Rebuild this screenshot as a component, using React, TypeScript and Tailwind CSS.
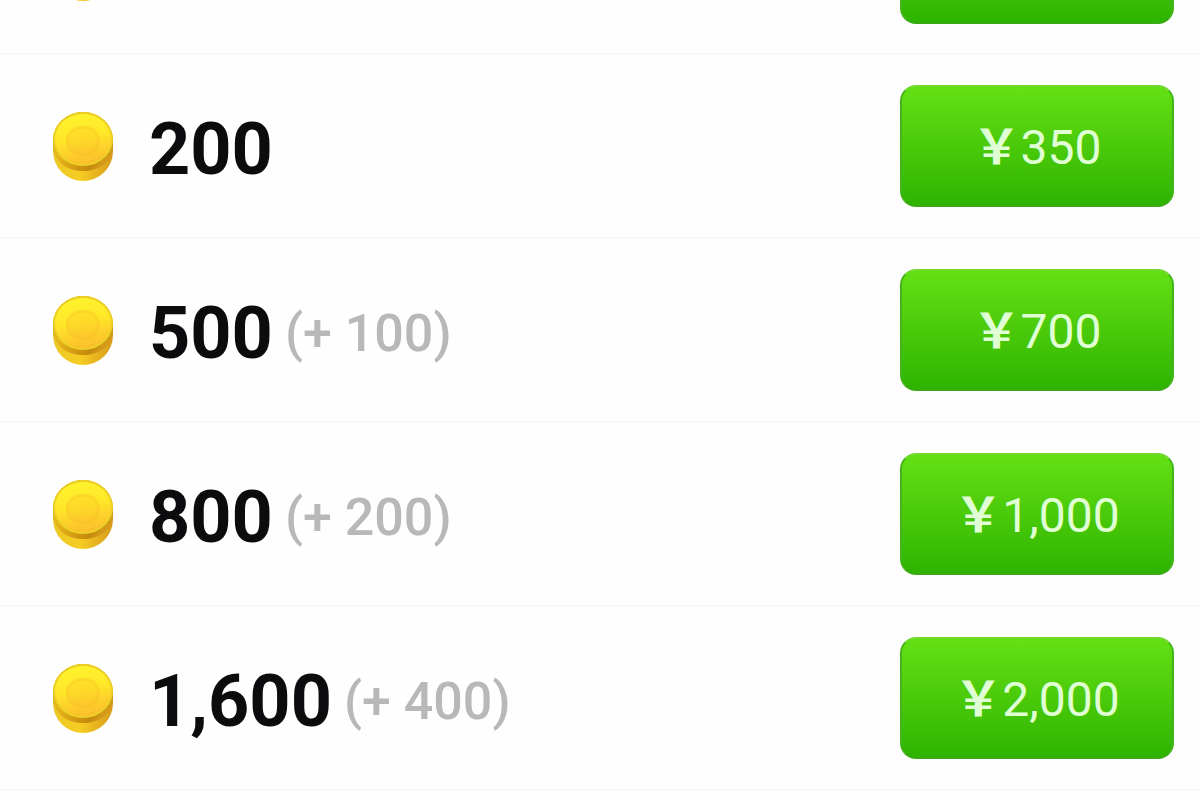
type Pack = {
  coins: string;
  bonus?: string;
  price: string;
};

const packs: Pack[] = [
  { coins: "200", price: "\uFFE5350" },
  { coins: "500", bonus: "(+ 100)", price: "\uFFE5700" },
  { coins: "800", bonus: "(+ 200)", price: "\uFFE51,000" },
  { coins: "1,600", bonus: "(+ 400)", price: "\uFFE52,000" },
];

function Coin() {
  return (
    <svg viewBox="0 0 64 72" className="h-[72px] w-16 shrink-0" aria-hidden="true">
      <defs>
        <linearGradient id="coin-face" x1="0.4" y1="0" x2="0.6" y2="1">
          <stop offset="0" stopColor="#fff32c" />
          <stop offset="0.45" stopColor="#ffe728" />
          <stop offset="1" stopColor="#fcbc2c" />
        </linearGradient>
        <linearGradient id="coin-edge" x1="0" y1="0" x2="1" y2="0.3">
          <stop offset="0" stopColor="#dcba22" />
          <stop offset="0.3" stopColor="#e6b31a" />
          <stop offset="0.8" stopColor="#c48a0c" />
          <stop offset="1" stopColor="#d49a1a" />
        </linearGradient>
        <linearGradient id="coin-base" x1="0" y1="0" x2="1" y2="0">
          <stop offset="0" stopColor="#ecc926" />
          <stop offset="0.45" stopColor="#f7cd25" />
          <stop offset="1" stopColor="#d69a1a" />
        </linearGradient>
      </defs>
      <path d="M3 31a30 29 0 0 1 60 0v10a30 30 0 0 1-60 0z" fill="url(#coin-base)" />
      <path d="M3 31a30 29 0 0 1 60 0v7c-2 15-15 23-30 23S5 53 3 38z" fill="url(#coin-edge)" />
      <ellipse cx="33" cy="29" rx="30" ry="27" fill="#ecd026" />
      <ellipse cx="33" cy="29" rx="28" ry="25" fill="url(#coin-face)" />
      <ellipse cx="33" cy="31" rx="16" ry="14" fill="#fbb62e" opacity="0.2" />
      <ellipse cx="33" cy="31" rx="16" ry="14" fill="none" stroke="#f5bd25" strokeWidth="3" opacity="0.3" />
    </svg>
  );
}

function BuyButton({ label }: { label?: string }) {
  return (
    <button
      type="button"
      aria-label={label ? undefined : "Buy"}
      className="h-[122px] w-[274px] shrink-0 rounded-2xl border-2 border-t-[#70d92c] border-r-[#43b51a] border-b-[#3aaa14] border-l-[#43b51a] bg-linear-to-b from-[#64e015] to-[#2db400] pt-1 text-center text-5xl text-[#e0ffd4]"
    >
      {label && (
        <>
          <span className="font-bold">{label.slice(0, 1)}</span>
          {label.slice(1)}
        </>
      )}
    </button>
  );
}

export default function App() {
  return (
    <main className="h-screen overflow-hidden bg-[#fefefe] font-['Roboto','Noto_Sans_CJK_JP',sans-serif]">
      <ul>
        <li className="flex h-[55px] items-end justify-between overflow-hidden border-b-2 border-[#f9f9f9] pr-[26px] pb-[29px] pl-[50px]">
          <div className="pb-[22px]">
            <Coin />
          </div>
          <BuyButton />
        </li>
        {packs.map((pack) => (
          <li
            key={pack.coins}
            className="flex h-[184px] items-center justify-between border-b-2 border-[#f9f9f9] pr-[26px] pl-[50px]"
          >
            <div className="flex items-center gap-[35px]">
              <Coin />
              <p className="flex items-center gap-3 pt-2 whitespace-nowrap">
                <strong className="text-[72px] leading-[84px] font-bold text-[#0c0c0e]">{pack.coins}</strong>
                {pack.bonus && (
                  <span className="text-[52px] leading-[60px] font-medium text-[#b8b8b8]">{pack.bonus}</span>
                )}
              </p>
            </div>
            <BuyButton label={pack.price} />
          </li>
        ))}
      </ul>
    </main>
  );
}
